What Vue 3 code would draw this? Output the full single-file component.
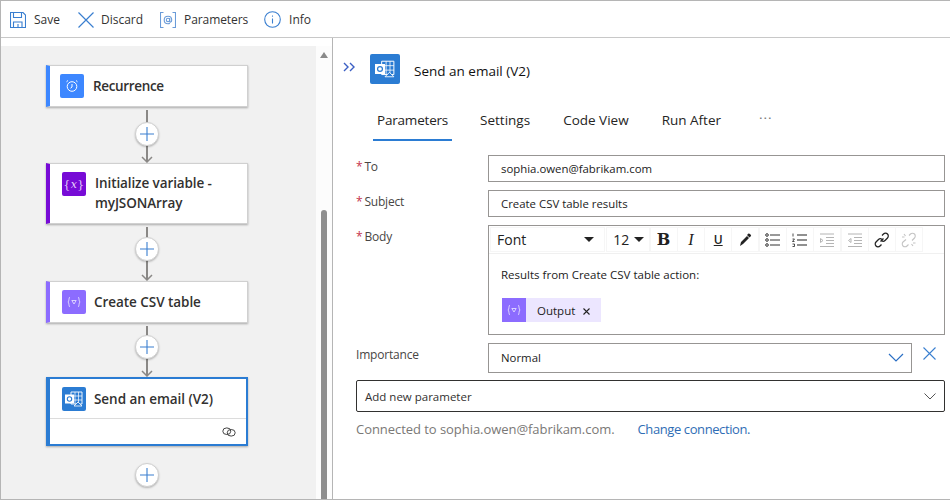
<script setup>
const steps = [
  { title: 'Recurrence', tone: 'blue', icon: 'clock', gap: 56, plusTop: 15 },
  { title: 'Initialize variable - myJSONArray', tone: 'violet', icon: 'var', gap: 57, plusTop: 13 },
  { title: 'Create CSV table', tone: 'lilac', icon: 'data', gap: 54, plusTop: 12 },
  { title: 'Send an email (V2)', tone: 'outlook', icon: 'mail', selected: true, gap: 50, plusTop: 17 },
]
const tabs = ['Parameters', 'Settings', 'Code View', 'Run After']
</script>

<template>
  <div class="page">
    <header class="toolbar">
      <button class="tool save">
        <svg width="16" height="16" viewBox="0 0 16 16" fill="none" stroke="#3a7fd0" stroke-width="1.1">
          <path d="M.5.5h12.500L15.500 3v12.500H.5z" />
          <path d="M3.500.5v5h8v-5M3.500 15.500V10h8.500v5.500M8 12v3.500" />
        </svg>
        Save
      </button>
      <button class="tool discard">
        <svg width="16" height="16" viewBox="0 0 16 16" fill="none" stroke="#3a7fd0" stroke-width="1.2">
          <path d="M.5.5l15 15M15.500.5l-15 15" />
        </svg>
        Discard
      </button>
      <button class="tool params">
        <svg width="16" height="16" viewBox="0 0 16 16" fill="none" stroke="#6a9bd8" stroke-width="1.1">
          <path d="M3.500.5H.5v15h3M12.500.5h3v15h-3" />
          <circle cx="8" cy="8" r="1.700" />
          <path d="M9.700 6v3.200c0 1.400 2 1.200 2-1.200 0-2.400-1.500-3.800-3.700-3.800S4.200 5.800 4.200 8s1.600 3.800 3.800 3.800c.8 0 1.400-.2 1.900-.5" />
        </svg>
        Parameters
      </button>
      <button class="tool info">
        <svg width="17" height="17" viewBox="0 0 17 17" fill="none" stroke="#3a7fd0" stroke-width="1.100">
          <circle cx="8.500" cy="8.500" r="7.800" />
          <path d="M8.500 7.500v5" />
          <path d="M8.500 4.500v1.200" />
        </svg>
        Info
      </button>
    </header>

    <main class="body">
      <section class="designer">
        <div class="canvas">
          <template v-for="step in steps" :key="step.title">
            <article class="card" :class="[step.tone, { selected: step.selected }]">
              <div class="card-head">
                <span class="card-icon">
                  <svg v-if="step.icon === 'clock'" width="14" height="14" viewBox="0 0 14 14" fill="none" stroke="#fff" stroke-width="1">
                    <circle cx="7" cy="7.500" r="4.800" />
                    <path d="M7 5v3L5.500 9.200M1.500 2.800l1.500-1.300M12.500 2.800L11 1.500" />
                  </svg>
                  <span v-else-if="step.icon === 'var'" class="var-glyph">{<i>x</i>}</span>
                  <svg v-else-if="step.icon === 'data'" width="14" height="12" viewBox="0 0 14 12" fill="none" stroke="#fff" stroke-width=".8" opacity=".85">
                    <path d="M3 1C1.500 1 2.400 5.500 1 6c1.400.5.5 5 2 5M11 1c1.500 0 .6 4.500 2 5-1.400.5-.5 5-2 5" />
                    <path d="M4.800 4.500h4.400L7 8z" />
                  </svg>
                  <svg v-else width="18" height="16" viewBox="0 0 18 16">
                    <path d="M6 1h11v12H6z" fill="none" stroke="#fff" stroke-width=".9" />
                    <path d="M6 5h11M6 9h11M10 1v12M13.500 1v12" stroke="#fff" stroke-width=".7" />
                    <rect x="0" y="3.500" width="9" height="9" fill="#fff" />
                    <circle cx="4.500" cy="8" r="2.200" fill="none" stroke="#2b7cd3" stroke-width="1.100" />
                    <path d="M9 15h8l-4-4z" fill="#2b7cd3" stroke="#fff" stroke-width=".8" />
                  </svg>
                </span>
                <h3>{{ step.title }}</h3>
              </div>
              <div v-if="step.selected" class="card-foot">
                <svg width="14" height="10" viewBox="0 0 14 10" fill="none" stroke="#444" stroke-width="1">
                  <ellipse cx="4.800" cy="4.200" rx="4" ry="3.300" />
                  <ellipse cx="9.200" cy="5.800" rx="4" ry="3.300" />
                </svg>
              </div>
            </article>
            <div class="connector" :class="{ last: step.selected }" :style="{ height: step.gap + 'px' }">
              <span class="plus" :style="{ top: step.plusTop + 'px' }">
                <svg width="14" height="14" viewBox="0 0 14 14" stroke="#3a7fd0" stroke-width="1.100">
                  <path d="M7 0v14M0 7h14" />
                </svg>
              </span>
              <svg v-if="!step.selected" class="arrow" width="12" height="7" viewBox="0 0 12 7" fill="none" stroke="#8a8886" stroke-width="1.500">
                <path d="M1 1l5 5 5-5" />
              </svg>
            </div>
          </template>
        </div>
        <aside class="scroll">
          <span class="scroll-up"></span>
          <span class="scroll-thumb"></span>
        </aside>
      </section>

      <section class="panel">
        <div class="panel-head">
          <svg class="collapse" width="12" height="10" viewBox="0 0 12 10" fill="none" stroke="#3b5fc4" stroke-width="1.400">
            <path d="M1 1l4 4-4 4M7 1l4 4-4 4" />
          </svg>
          <span class="panel-icon">
            <svg width="20" height="18" viewBox="0 0 18 16">
              <path d="M6 1h11v12H6z" fill="none" stroke="#fff" stroke-width=".9" />
              <path d="M6 5h11M6 9h11M10 1v12M13.500 1v12" stroke="#fff" stroke-width=".7" />
              <rect x="0" y="3.500" width="9" height="9" fill="#fff" />
              <circle cx="4.500" cy="8" r="2.200" fill="none" stroke="#2b7cd3" stroke-width="1.100" />
              <path d="M9 15h8l-4-4z" fill="#2b7cd3" stroke="#fff" stroke-width=".8" />
            </svg>
          </span>
          <h2>Send an email (V2)</h2>
        </div>

        <nav class="tabs">
          <a v-for="(tab, i) in tabs" :key="tab" class="tab" :class="{ active: i === 0 }">{{ tab }}</a>
          <a class="tab more">···</a>
        </nav>

        <div class="form">
          <label class="field-label req">To</label>
          <div class="input">sophia.owen@fabrikam.com</div>

          <label class="field-label req">Subject</label>
          <div class="input">Create CSV table results</div>

          <label class="field-label req">Body</label>
          <div class="editor">
            <div class="rte-bar">
              <span class="rte-btn font">Font<b class="caret"></b></span>
              <span class="rte-btn size">12<b class="caret"></b></span>
              <span class="rte-btn bold">B</span>
              <span class="rte-btn ital">I</span>
              <span class="rte-btn under">U</span>
              <span class="rte-btn">
                <svg width="14" height="14" viewBox="0 0 14 14"><path d="M2 13l1-4 6-6 2 2-6 6zM9 2l1.500-1.500c.8-.6 3.100 1.700 2.500 2.500L11.500 4.500z" fill="#222" /></svg>
              </span>
              <span class="rte-btn">
                <svg width="16" height="14" viewBox="0 0 16 14" fill="none" stroke="#333" stroke-width="1">
                  <circle cx="2" cy="2" r="1.300" /><circle cx="2" cy="7" r="1.300" /><circle cx="2" cy="12" r="1.300" />
                  <path d="M5 2h10M5 7h10M5 12h10" />
                </svg>
              </span>
              <span class="rte-btn">
                <svg width="16" height="14" viewBox="0 0 16 14" fill="none" stroke="#222" stroke-width="1.100">
                  <path d="M1 .5v3M.5 6h2l-2 2.500h2M.5 11h2v2.500h-2" stroke-width=".8" />
                  <path d="M5 2h10M5 7h10M5 12h10" />
                </svg>
              </span>
              <span class="rte-btn">
                <svg width="16" height="14" viewBox="0 0 16 14" fill="none" stroke="#b4b4b4" stroke-width="1">
                  <path d="M1 1h14M7 4.500h8M7 7.500h8M7 10.500h8M1 13.500h14M1.500 5.500L4 7.500l-2.500 2z" />
                </svg>
              </span>
              <span class="rte-btn">
                <svg width="16" height="14" viewBox="0 0 16 14" fill="none" stroke="#b4b4b4" stroke-width="1">
                  <path d="M1 1h14M7 4.500h8M7 7.500h8M7 10.500h8M1 13.500h14M4 5.500L1.500 7.500l2.500 2z" />
                </svg>
              </span>
              <span class="rte-btn">
                <svg width="16" height="16" viewBox="0 0 16 16" fill="none" stroke="#222" stroke-width="1.300">
                  <path d="M6.500 9.500l3-3M8 3.500l1.500-1.500c1-1 3-1 4 0s1 3 0 4L11 8.500c-1 1-2.500 1-3.500 0M8 7.500c-1-1-2.500-1-3.500 0L2 10c-1 1-1 3 0 4s3 1 4 0l1.500-1.500" />
                </svg>
              </span>
              <span class="rte-btn">
                <svg width="16" height="16" viewBox="0 0 16 16" fill="none" stroke="#c4c4c4" stroke-width="1.100">
                  <path d="M8 3.500l1.500-1.500c1-1 3-1 4 0s1 3 0 4L11 8.500M5 7.500L2 10c-1 1-1 3 0 4s3 1 4 0l1.500-1.500M3 2l1.500 2M1 5h2.500M12 14l-1.500-2M14.500 11H12" />
                </svg>
              </span>
            </div>
            <div class="rte-body">
              <p>Results from Create CSV table action:</p>
              <span class="token">
                <span class="token-icon">
                  <svg width="14" height="12" viewBox="0 0 14 12" fill="none" stroke="#fff" stroke-width=".8" opacity=".85">
                    <path d="M3 1C1.500 1 2.400 5.500 1 6c1.400.5.5 5 2 5M11 1c1.500 0 .6 4.500 2 5-1.400.5-.5 5-2 5" />
                    <path d="M4.800 4.500h4.400L7 8z" />
                  </svg>
                </span>
                <span class="token-text">Output</span>
                <svg class="token-x" width="7" height="7" viewBox="0 0 7 7" stroke="#222" stroke-width="1.100"><path d="M.5.5l6 6M6.500.5l-6 6" /></svg>
              </span>
            </div>
          </div>

          <label class="field-label">Importance</label>
          <div class="importance">
            <div class="input select">
              Normal
              <svg width="16" height="9" viewBox="0 0 16 9" fill="none" stroke="#2b6fc4" stroke-width="1.200"><path d="M1 1l7 7 7-7" /></svg>
            </div>
            <svg class="remove" width="13" height="13" viewBox="0 0 13 13" stroke="#3a7fd0" stroke-width="1.100"><path d="M.5.5l12 12M12.500.5l-12 12" /></svg>
          </div>
        </div>

        <div class="add-param">
          Add new parameter
          <svg width="12" height="7" viewBox="0 0 12 7" fill="none" stroke="#555" stroke-width="1"><path d="M.5.5L6 6 11.500.5" /></svg>
        </div>

        <p class="conn">
          <span>Connected to sophia.owen@fabrikam.com.</span>
          <a>Change connection.</a>
        </p>
      </section>
    </main>
  </div>
</template>

<style>
html, body { margin: 0; background: #fff; overflow: hidden; }
</style>

<style scoped>
.page {
  width: 950px;
  height: 500px;
  box-sizing: border-box;
  border-top: 1px solid #b5b5b5;
  border-left: 1px solid #b5b5b5;
  border-bottom: 1px solid #b5b5b5;
  display: flex;
  flex-direction: column;
  font-family: "Open Sans", "Noto Sans", sans-serif;
  color: #252423;
  overflow: hidden;
}
.toolbar {
  height: 35px;
  padding-top: 1px;
  flex: none;
  border-bottom: 1px solid #c8c8c8;
  display: flex;
  align-items: center;
  padding-left: 9px;
  box-sizing: content-box;
}
.tool {
  display: flex;
  align-items: center;
  gap: 8px;
  border: 0;
  padding: 0;
  background: none;
  font: 12px "Open Sans", sans-serif;
  color: #333;
}
.save { margin-right: 18px; }
.discard { margin-right: 17px; gap: 7px; }
.params { margin-right: 16px; letter-spacing: -.1px; }
.body {
  flex: 1;
  min-height: 0;
  display: flex;
}
.designer {
  width: 332px;
  flex: none;
  padding-top: 8px;
  box-sizing: border-box;
  border-right: 1px solid #b5b5b5;
  display: flex;
}
.canvas {
  width: 315px;
  flex: none;
  background: #f1f1f1;
  padding: 19px 0 0 45px;
  box-sizing: border-box;
  display: flex;
  flex-direction: column;
  align-items: flex-start;
}
.card {
  width: 202px;
  box-sizing: border-box;
  background: #fff;
  border: 1px solid #d0d0d0;
  border-left: 4px solid #3d87ff;
  box-shadow: 0 1px 2px rgba(0, 0, 0, .3);
}
.card.violet { border-left-color: #770bd6; }
.card.lilac { border-left-color: #8c6cff; }
.card.outlook {
  border: 2px solid #2b7cd3;
  border-left-width: 4px;
}
.card-head {
  min-height: 40px;
  display: flex;
  align-items: center;
  padding-left: 10px;
  gap: 9px;
}
.violet .card-head {
  min-height: 59px;
  align-items: flex-start;
  padding-left: 12px;
  gap: 9px;
}
.lilac .card-head { padding-left: 12px; gap: 8px; }
.outlook .card-head { min-height: 39px; padding-left: 12px; gap: 8px; border-bottom: 1px solid #dcdcdc; }
.card-icon {
  width: 24px;
  height: 24px;
  flex: none;
  border-radius: 2px;
  display: flex;
  align-items: center;
  justify-content: center;
  background: #3d87ff;
}
.violet .card-icon { background: #770bd6; margin-top: 8px; }
.lilac .card-icon { background: #8c6cff; }
.outlook .card-icon { background: #2b7cd3; }
.var-glyph {
  color: #e8d5fa;
  font: 11px "DejaVu Serif", serif;
  letter-spacing: .5px;
}
.card h3 {
  margin: 0;
  font-size: 13.5px;
  font-weight: 600;
  line-height: 20px;
  color: #323130;
  letter-spacing: -.05px;
}
.blue h3 { letter-spacing: -.35px; }
.violet h3 { padding-top: 9px; width: 145px; letter-spacing: -.1px; }
.card-foot {
  height: 25px;
  display: flex;
  justify-content: flex-end;
  align-items: center;
  padding-right: 10px;
}
.connector {
  width: 202px;
  flex: none;
  position: relative;
  display: flex;
  justify-content: center;
  background: linear-gradient(#8a8886, #8a8886) 100px 3px / 2px calc(100% - 5px) no-repeat;
}
.connector.last { background: none; }
.plus {
  position: absolute;
  left: 89px;
  width: 22px;
  height: 22px;
  border: 1px solid #d0d0d0;
  border-radius: 50%;
  background: #fff;
  box-shadow: 0 1px 2px rgba(0, 0, 0, .25);
  display: flex;
  align-items: center;
  justify-content: center;
}
.arrow {
  position: absolute;
  left: 95px;
  bottom: 0;
}
.scroll {
  flex: 1;
  position: relative;
  background: #fcfcfc;
}
.scroll-up {
  position: absolute;
  top: 6px;
  left: 4px;
  border: 4px solid transparent;
  border-top: 0;
  border-bottom: 6px solid #8a8a8a;
}
.scroll-thumb {
  position: absolute;
  top: 164px;
  bottom: 0;
  left: 5px;
  width: 6px;
  background: #8e8e8e;
  border-radius: 3px 3px 0 0;
}
.panel {
  flex: 1;
  min-width: 0;
  padding: 16px 4px 0 23px;
  position: relative;
}
.panel-head {
  display: flex;
  align-items: center;
  height: 30px;
}
.collapse {
  margin: 0 15px 4px -13px;
  align-self: center;
}
.panel-icon {
  width: 30px;
  height: 30px;
  border-radius: 2px;
  background: #2b7cd3;
  display: flex;
  align-items: center;
  justify-content: center;
}
.panel-head h2 {
  margin: 0 0 0 14px;
  font-size: 13.5px;
  font-weight: 400;
  color: #111;
  position: relative;
  top: 2px;
}
.tabs {
  margin: 16px 0 0 17px;
  height: 41px;
  display: flex;
  gap: 33px;
}
.tab {
  display: block;
  height: 41px;
  line-height: 41px;
  font-size: 13.5px;
  color: #252423;
  box-sizing: border-box;
}
.tab.active {
  border-bottom: 2px solid #2b7cd3;
  padding: 0 4px;
  margin-right: -5px;
  letter-spacing: -.2px;
}
.tab.more { color: #777; margin-left: 5px; letter-spacing: 1px; line-height: 37px; }
.form {
  margin-top: 14px;
  display: grid;
  grid-template-columns: 132px 457px;
  row-gap: 8px;
}
.field-label {
  font-size: 12px;
  line-height: 24px;
  color: #484644;
  letter-spacing: -.2px;
}
.field-label.req::before {
  content: "*";
  color: #c4314b;
  margin-right: 2px;
}
.input {
  height: 27px;
  box-sizing: border-box;
  border: 1px solid #979593;
  padding: 0 12px;
  font-size: 11.4px;
  line-height: 26px;
  color: #222;
}
.editor {
  height: 110px;
  box-sizing: border-box;
  border: 1px solid #979593;
}
.rte-bar {
  height: 27px;
  display: flex;
  align-items: center;
  gap: 1.3px;
  border-bottom: 1px solid #f0f0f0;
  padding-left: 2px;
}
.rte-btn {
  height: 23px;
  width: 26px;
  flex: none;
  box-sizing: border-box;
  display: flex;
  align-items: center;
  justify-content: center;
  font-size: 14px;
  color: #222;
  box-shadow: 0 0 0 1px #f6f6f6;
}
.rte-btn.font {
  width: 113px;
  margin-right: 2px;
  justify-content: space-between;
  padding: 0 10px 0 6px;
}
.rte-btn.size {
  width: 42px;
  justify-content: flex-start;
  gap: 5px;
  padding-left: 6px;
}
.caret {
  border: 5px solid transparent;
  border-top: 5px solid #222;
  border-bottom: 0;
}
.bold { font: 700 16px "DejaVu Serif", serif; }
.ital { font: italic 16px "Liberation Serif", serif; }
.under { text-decoration: underline; font-weight: 600; font-size: 12px; }
.rte-body {
  padding: 13px 0 0 12px;
  font-size: 11.5px;
  color: #222;
}
.rte-body p { margin: 0 0 15px; line-height: 16px; }
.token {
  display: inline-flex;
  align-items: center;
  height: 24px;
  width: 99px;
  margin-left: 1px;
  background: #ece6ff;
}
.token-icon {
  width: 24px;
  height: 24px;
  background: #8c6cff;
  display: flex;
  align-items: center;
  justify-content: center;
}
.token-text { margin-left: 11px; }
.token-x { margin: 2px 0 0 8px; }
.importance {
  display: flex;
  align-items: center;
  position: relative;
}
.select {
  width: 424px;
  height: 30px;
  line-height: 29px;
  display: flex;
  justify-content: space-between;
  align-items: center;
  padding-right: 7px;
  padding-bottom: 1px;
}
.remove {
  position: absolute;
  left: 435px;
  top: 4px;
}
.add-param {
  margin-top: 7px;
  width: 589px;
  height: 32px;
  box-sizing: border-box;
  border: 1px solid #323130;
  border-radius: 2px;
  padding: 0 8px;
  display: flex;
  justify-content: space-between;
  align-items: center;
  font-size: 11.5px;
  color: #323130;
}
.conn {
  margin: 8px 0 0;
  font-size: 13px;
  line-height: 18px;
  letter-spacing: -.05px;
  color: #7a7876;
  display: flex;
  gap: 23px;
}
.conn a { color: #2f6db5; letter-spacing: -.4px; }
</style>
